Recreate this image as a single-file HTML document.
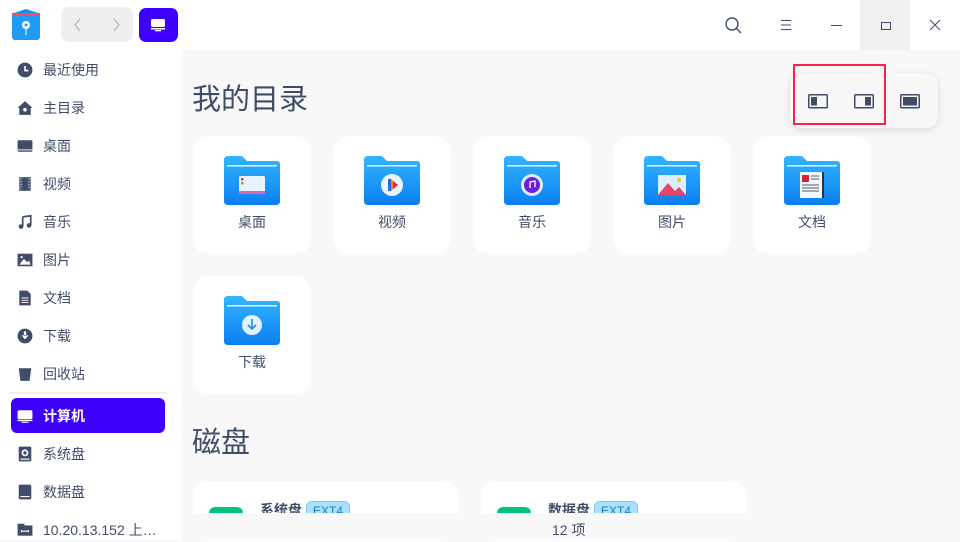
<!DOCTYPE html>
<html><head><meta charset="utf-8"><style>
*{margin:0;padding:0;box-sizing:border-box}
body{width:960px;height:540px;overflow:hidden;background:#f8f8f8;font-family:"Liberation Sans","Noto Sans CJK SC",sans-serif;color:#414d68;position:relative}
.abs{position:absolute}
.top{left:0;top:0;width:960px;height:50px;background:#fff}
.side{left:0;top:50px;width:182px;height:490px;background:#fff}
.item{position:absolute;left:17px;height:24px;font-size:14px;display:flex;align-items:center;color:#414d68}
.item .ic{width:16px;height:16px;margin-right:10px;display:inline-block;flex-shrink:0}
.card{position:absolute;width:118px;height:118px;background:#fff;border-radius:16px}
.card .lbl{position:absolute;top:76px;width:100%;text-align:center;font-size:14px;color:#414d68}
.fold{position:absolute;left:31px;top:20px;width:56px;height:49px}
h2{position:absolute;font-weight:normal;font-size:29px;color:#414d68}
</style></head><body>
<div class="abs top"></div>
<div class="abs side"></div>
<svg class="abs" style="left:11px;top:9px" width="30" height="32" viewBox="0 0 30 32"><path d="M3 4 L15 0 L27 4 L27 30 L3 30Z" fill="#1a8df0"/><rect x="1" y="5" width="28" height="26" rx="3" fill="#1f9af5"/><rect x="1" y="4" width="28" height="3" fill="#e8545c"/><circle cx="15" cy="16" r="4" fill="#fff"/><circle cx="15" cy="16" r="1.5" fill="#1f9af5"/><line x1="15" y1="20" x2="15" y2="26" stroke="#fff"/></svg>
<div class="abs" style="left:61px;top:7px;width:72px;height:35px;background:#efefef;border-radius:8px"></div>
<svg class="abs" style="left:73px;top:17px" width="10" height="16"><path d="M7 2L2 8L7 14" stroke="#b0b4bc" stroke-width="1.2" fill="none"/></svg>
<svg class="abs" style="left:111px;top:17px" width="10" height="16"><path d="M3 2L8 8L3 14" stroke="#b0b4bc" stroke-width="1.2" fill="none"/></svg>
<div class="abs" style="left:139px;top:8px;width:39px;height:34px;background:#3d00ff;border-radius:7px"></div>
<svg class="abs" style="left:150px;top:18px" width="16" height="14"><rect x="1" y="1" width="14" height="8" rx="1.5" fill="#fff"/><rect x="1" y="10" width="14" height="1.5" fill="#fff"/><rect x="5" y="12" width="6" height="1.3" fill="#fff"/></svg>
<div class="abs" style="left:860px;top:0;width:50px;height:50px;background:#f0f0f0"></div>
<svg class="abs" style="left:724px;top:16px" width="20" height="20"><circle cx="8" cy="8" r="6" fill="none" stroke="#414d68" stroke-width="1.4"/><line x1="12.3" y1="12.3" x2="17" y2="17" stroke="#414d68" stroke-width="1.4"/></svg>
<svg class="abs" style="left:780px;top:19px" width="12" height="12"><path d="M1 1.5H11M1 6H11M1 10.5H11" stroke="#414d68" stroke-width="1"/></svg>
<div class="abs" style="left:831px;top:25px;width:11px;height:1px;background:#414d68"></div>
<div class="abs" style="left:881px;top:22px;width:10px;height:8px;border:1px solid #414d68"></div>
<svg class="abs" style="left:929px;top:19px" width="12" height="12"><path d="M1 1L11 11M11 1L1 11" stroke="#414d68" stroke-width="1"/></svg>
<div class="item" style="top:58px"><svg class="ic" viewBox="0 0 14 14"><circle cx="7" cy="7" r="6.5" fill="#414d68"/><path d="M7 3.5V7.5H10" stroke="#fff" stroke-width="1.4" fill="none"/></svg>最近使用</div>
<div class="item" style="top:96px"><svg class="ic" viewBox="0 0 14 14"><path d="M7 1L13.5 7H12V13H2V7H0.5Z" fill="#414d68"/><circle cx="7" cy="8.5" r="1.6" fill="#fff"/></svg>主目录</div>
<div class="item" style="top:134px"><svg class="ic" viewBox="0 0 14 14"><rect x="0.5" y="2" width="13" height="10" rx="1" fill="#414d68"/><rect x="0.5" y="10" width="13" height="0.8" fill="#fff"/></svg>桌面</div>
<div class="item" style="top:172px"><svg class="ic" viewBox="0 0 14 14"><rect x="2" y="1" width="10" height="12" fill="#414d68"/><path d="M3.5 2v10M10.5 2v10" stroke="#fff" stroke-width="0.8" stroke-dasharray="1.2 1.2"/></svg>视频</div>
<div class="item" style="top:210px"><svg class="ic" viewBox="0 0 14 14"><path d="M5 2.5L12 1.5V10" stroke="#414d68" stroke-width="1.5" fill="none"/><path d="M5 2.5V11" stroke="#414d68" stroke-width="1.5"/><circle cx="3.5" cy="11" r="2" fill="#414d68"/><circle cx="10.5" cy="10" r="2" fill="#414d68"/></svg>音乐</div>
<div class="item" style="top:248px"><svg class="ic" viewBox="0 0 14 14"><rect x="0.5" y="1.5" width="13" height="11" fill="#414d68"/><path d="M2 11L6 6L9 9L10.5 7.5L12 11Z" fill="#fff"/><circle cx="4" cy="4.5" r="1" fill="#fff"/></svg>图片</div>
<div class="item" style="top:286px"><svg class="ic" viewBox="0 0 14 14"><path d="M2 0.5H9L12 3.5V13.5H2Z" fill="#414d68"/><path d="M4 7H10M4 9H10M4 11H10" stroke="#fff" stroke-width="0.8"/></svg>文档</div>
<div class="item" style="top:324px"><svg class="ic" viewBox="0 0 14 14"><circle cx="7" cy="7" r="6.5" fill="#414d68"/><path d="M4 6.5L7 10L10 6.5ZM6 3H8V7H6Z" fill="#fff"/></svg>下载</div>
<div class="item" style="top:362px"><svg class="ic" viewBox="0 0 14 14"><path d="M1.5 2H12.5L11 13H3Z" fill="#414d68"/></svg>回收站</div>
<div class="abs" style="left:10px;top:392px;width:156px;height:2px;background:#eee"></div>
<div class="abs" style="left:11px;top:398px;width:154px;height:35px;background:#3d00ff;border-radius:6px"></div>
<div class="item" style="top:404px;color:#fff;font-weight:bold"><svg class="ic" viewBox="0 0 14 14"><rect x="0.5" y="2" width="13" height="8" rx="1.5" fill="#fff"/><rect x="0.5" y="10.5" width="13" height="1" fill="#fff"/><rect x="4" y="12" width="6" height="1" fill="#fff"/></svg>计算机</div>
<div class="item" style="top:442px"><svg class="ic" viewBox="0 0 14 14"><rect x="1.5" y="0.5" width="11" height="13" rx="1" fill="#414d68"/><circle cx="7" cy="6" r="3" fill="#fff"/><circle cx="7" cy="6" r="1.5" fill="#414d68"/><rect x="3" y="11" width="8" height="1" fill="#fff"/></svg>系统盘</div>
<div class="item" style="top:480px"><svg class="ic" viewBox="0 0 14 14"><rect x="1.5" y="0.5" width="11" height="13" rx="1.5" fill="#414d68"/><rect x="3" y="10.5" width="8" height="1" fill="#fff"/></svg>数据盘</div>
<div class="item" style="top:518px"><svg class="ic" viewBox="0 0 14 14"><rect x="0.5" y="3" width="13" height="9" fill="#414d68"/><rect x="0.5" y="1.5" width="6" height="2" fill="#414d68"/><path d="M4 8H10M4 7V9M10 7V9" stroke="#fff"/></svg>10.20.13.152 上…</div>
<h2 style="left:192px;top:76px">我的目录</h2>
<h2 style="left:192px;top:419px">磁盘</h2>
<svg width="0" height="0" style="position:absolute"><defs><linearGradient id="fg" x1="0" y1="0" x2="0" y2="1"><stop offset="0" stop-color="#33b6ff"/><stop offset="1" stop-color="#0a7ef0"/></linearGradient></defs></svg>
<div class="card" style="left:193px;top:136px"><svg class="fold" viewBox="0 0 56 49"><path d="M0 4Q0 0 4 0H18L23 5H53Q56 5 56 8V45Q56 49 52 49H4Q0 49 0 45Z" fill="url(#fg)"/><rect x="3" y="9" width="50" height="1.5" fill="#e8f6ff"/><rect x="15" y="20" width="26" height="18" rx="1.5" fill="#e6f2ff"/><rect x="17" y="22" width="2.5" height="2.5" fill="#e33"/><rect x="17" y="26" width="2.5" height="2.5" fill="#6b3"/><rect x="15" y="35" width="26" height="3" fill="#d6a"/></svg><div class="lbl">桌面</div></div>
<div class="card" style="left:333px;top:136px"><svg class="fold" viewBox="0 0 56 49"><path d="M0 4Q0 0 4 0H18L23 5H53Q56 5 56 8V45Q56 49 52 49H4Q0 49 0 45Z" fill="url(#fg)"/><rect x="3" y="9" width="50" height="1.5" fill="#e8f6ff"/><circle cx="28" cy="29" r="11" fill="#eef6ff"/><rect x="24" y="23" width="3" height="12" fill="#1c6ef2"/><path d="M27 23L34 29L27 35Z" fill="#ff8a00"/><path d="M29 25L34 29L29 33Z" fill="#e0148a"/></svg><div class="lbl">视频</div></div>
<div class="card" style="left:473px;top:136px"><svg class="fold" viewBox="0 0 56 49"><path d="M0 4Q0 0 4 0H18L23 5H53Q56 5 56 8V45Q56 49 52 49H4Q0 49 0 45Z" fill="url(#fg)"/><rect x="3" y="9" width="50" height="1.5" fill="#e8f6ff"/><circle cx="28" cy="29" r="11" fill="#dceeff"/><circle cx="28" cy="29" r="8" fill="#6a1fd8"/><path d="M26 32V26L31 25V31" stroke="#fff" stroke-width="1.3" fill="none"/></svg><div class="lbl">音乐</div></div>
<div class="card" style="left:613px;top:136px"><svg class="fold" viewBox="0 0 56 49"><path d="M0 4Q0 0 4 0H18L23 5H53Q56 5 56 8V45Q56 49 52 49H4Q0 49 0 45Z" fill="url(#fg)"/><rect x="3" y="9" width="50" height="1.5" fill="#e8f6ff"/><rect x="14" y="19" width="28" height="20" fill="#d8f0ff"/><path d="M14 39L24 27L31 35L35 31L42 39Z" fill="#e8456a"/><circle cx="35" cy="24" r="2" fill="#ffc400"/></svg><div class="lbl">图片</div></div>
<div class="card" style="left:753px;top:136px"><svg class="fold" viewBox="0 0 56 49"><path d="M0 4Q0 0 4 0H18L23 5H53Q56 5 56 8V45Q56 49 52 49H4Q0 49 0 45Z" fill="url(#fg)"/><rect x="3" y="9" width="50" height="1.5" fill="#e8f6ff"/><rect x="16" y="16" width="22" height="26" fill="#f4f8ff"/><rect x="18" y="19" width="7" height="7" fill="#d23"/><path d="M27 20H35M27 23H35M18 29H35M18 32H35M18 35H35" stroke="#556" stroke-width="1"/><rect x="38" y="16" width="2" height="26" fill="#333"/></svg><div class="lbl">文档</div></div>
<div class="card" style="left:193px;top:276px"><svg class="fold" viewBox="0 0 56 49"><path d="M0 4Q0 0 4 0H18L23 5H53Q56 5 56 8V45Q56 49 52 49H4Q0 49 0 45Z" fill="url(#fg)"/><rect x="3" y="9" width="50" height="1.5" fill="#e8f6ff"/><circle cx="28" cy="29" r="10" fill="#e4f2ff"/><path d="M28 23V33M24 29L28 33L32 29" stroke="#1a8ef0" stroke-width="1.6" fill="none"/></svg><div class="lbl">下载</div></div>
<div class="abs" style="left:193px;top:481px;width:266px;height:60px;background:#fff;border-radius:16px"></div>
<div class="abs" style="left:481px;top:481px;width:266px;height:60px;background:#fff;border-radius:16px"></div>
<div class="abs" style="left:209px;top:507px;width:34px;height:20px;background:#00c27a;border-radius:6px"></div>
<div class="abs" style="left:497px;top:507px;width:34px;height:20px;background:#00c27a;border-radius:6px"></div>
<div class="abs" style="left:260px;top:500px;font-size:14px;font-weight:bold">系统盘</div>
<div class="abs" style="left:306px;top:501px;padding:0 6px;height:18px;line-height:18px;font-size:12px;background:#a8e2ff;border:1px solid #7cc8f0;border-radius:6px;color:#2a79b8">EXT4</div>
<div class="abs" style="left:548px;top:500px;font-size:14px;font-weight:bold">数据盘</div>
<div class="abs" style="left:594px;top:501px;padding:0 6px;height:18px;line-height:18px;font-size:12px;background:#a8e2ff;border:1px solid #7cc8f0;border-radius:6px;color:#2a79b8">EXT4</div>
<div class="abs" style="left:182px;top:513px;width:778px;height:27px;background:#f8f8f8"></div>
<div class="abs" style="left:552px;top:520px;font-size:14px">12 项</div>
<div class="abs" style="left:790px;top:73px;width:148px;height:55px;background:#f7f7f7;border-radius:12px;box-shadow:0 2px 8px rgba(0,0,0,0.12)"></div>
<svg class="abs" style="left:863px;top:54px" width="44" height="24"><path d="M0 24Q14 24 20 10Q24 3 28 10Q32 24 44 24Z" fill="#f7f7f7"/></svg>
<div class="abs" style="left:793px;top:64px;width:93px;height:61px;border:2px solid #ff1f4b"></div>
<svg class="abs" style="left:808px;top:94px" width="20" height="15"><rect x="0.75" y="0.75" width="18.5" height="13" rx="1" fill="none" stroke="#414d68" stroke-width="1.5"/><rect x="3" y="3" width="6" height="8.5" fill="#414d68"/></svg>
<svg class="abs" style="left:854px;top:94px" width="20" height="15"><rect x="0.75" y="0.75" width="18.5" height="13" rx="1" fill="none" stroke="#414d68" stroke-width="1.5"/><rect x="11" y="3" width="6" height="8.5" fill="#414d68"/></svg>
<svg class="abs" style="left:900px;top:94px" width="20" height="15"><rect x="0.75" y="0.75" width="18.5" height="13" rx="1" fill="none" stroke="#414d68" stroke-width="1.5"/><rect x="3" y="3" width="14" height="8.5" fill="#414d68"/></svg>
</body></html>
